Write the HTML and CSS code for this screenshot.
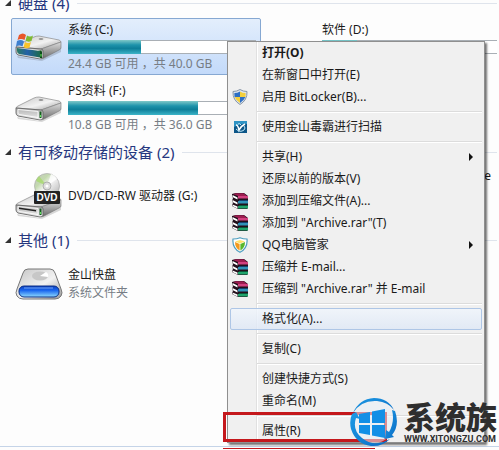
FILE: index.html
```html
<!DOCTYPE html>
<html lang="zh-CN">
<head>
  <meta charset="UTF-8">
  <meta name="viewport" content="width=device-width, initial-scale=1.0">
  <title>计算机</title>
  <link rel="stylesheet" href="styles.css">
</head>
<body>
  <!-- 图标定义 -->
  <svg class="defs" width="0" height="0" aria-hidden="true">
    <defs>
      <linearGradient id="top" x1="0" y1="0" x2="1" y2="1">
        <stop offset="0" stop-color="#c4c4c4"/>
        <stop offset=".55" stop-color="#f2f2f2"/>
        <stop offset="1" stop-color="#999"/>
      </linearGradient>
      <linearGradient id="side" x1="0" y1="0" x2="0" y2="1">
        <stop offset="0" stop-color="#dcdcdc"/>
        <stop offset="1" stop-color="#6c6c6c"/>
      </linearGradient>
      <linearGradient id="front" x1="0" y1="0" x2="0" y2="1">
        <stop offset="0" stop-color="#b0b0b0"/>
        <stop offset="1" stop-color="#eee"/>
      </linearGradient>
      <linearGradient id="sysfront" x1="0" y1="0" x2="1" y2="0">
        <stop offset="0" stop-color="#2a7a63"/>
        <stop offset=".45" stop-color="#2461a8"/>
        <stop offset="1" stop-color="#1c6b4f"/>
      </linearGradient>
      <linearGradient id="blue" x1="0" y1="0" x2="0" y2="1">
        <stop offset="0" stop-color="#0a3fc0"/>
        <stop offset=".4" stop-color="#1a66ee"/>
        <stop offset="1" stop-color="#8fdcff"/>
      </linearGradient>
      <linearGradient id="disc" x1="0" y1="0" x2="1" y2="1">
        <stop offset="0" stop-color="#c6c6c6"/>
        <stop offset=".3" stop-color="#c3d9ae"/>
        <stop offset=".5" stop-color="#f5f5f5"/>
        <stop offset="1" stop-color="#a8a8a8"/>
      </linearGradient>
      <linearGradient id="logo" x1="0" y1="0" x2="1" y2="1">
        <stop offset="0" stop-color="#1d9be6"/>
        <stop offset="1" stop-color="#0a6bc4"/>
      </linearGradient>
    </defs>
    <symbol id="drive" viewBox="0 0 48 26">
      <path d="M2 21 25 25 46 13V17L27 26 3 23Z" fill="#000" opacity=".15"/>
      <path d="M1 12Q1 11 3 10L19 2Q21 1 24 1L44 5Q46 6 46 7L26 14Z" fill="url(#top)" stroke="#8b8b8b" stroke-width=".7"/>
      <path d="M26 14 46 7V13Q46 14 44 15L29 23Q27 24 26 23Z" fill="url(#side)" stroke="#777" stroke-width=".6"/>
      <path d="M1 12 26 14Q28 14 28 16V22Q28 24 25 24L3 20Q1 19 1 17Z" fill="url(#front)" stroke="#666" stroke-width=".9"/>
      <path d="M3 13.500 23 15.500V21.500L4 18.500Q3 18 3 17Z" fill="none" stroke="#fff" stroke-width=".8"/>
      <path d="M24.500 15.500H26.500V22H24.500Z" fill="#175a20"/>
      <path d="M25 19H26V21H25Z" fill="#5de35b"/>
      <ellipse cx="26" cy="4" rx="2.500" ry=".8" fill="#777"/>
    </symbol>
    <symbol id="rar" viewBox="0 0 16 16">
      <path d="M4 0H12L16 3V15L15 16H6L0 13V12L1 10 0 8 1 5 0 3V1Z" fill="#22101c"/>
      <path d="M1 1 4 .3H11.500L15 3H6Z" fill="#9c1d50"/>
      <path d="M6 3H16V5.500H6Z" fill="#d2417f"/>
      <path d="M7 7H16V8H7Z" fill="#17406e"/>
      <path d="M6 8H16V10.500H6Z" fill="#2f92b8"/>
      <path d="M7 12H16V13H7Z" fill="#0a5438"/>
      <path d="M6 13H16V15.500H6Z" fill="#1fa36b"/>
      <path d="M.5 2 5.500 4.500V6.500L.5 4ZM.5 7 5.500 9.500V11.500L.5 9ZM.5 11.500 5.500 13.500V15.500L.5 13Z" fill="#fff"/>
    </symbol>
  </svg>

  <!-- 资源管理器内容 -->
  <main class="explorer">
    <section class="group">
      <h2 class="group-title"><span class="arrow"></span>硬盘 (4)</h2>
      <div class="tiles">
        <article class="tile selected">
          <svg class="tile-icon" viewBox="0 0 48 48" aria-hidden="true">
            <use href="#drive" y="12" width="48" height="26"/>
            <path d="M2 25 25 28V34.500L4 31Q2 30 2 28Z" fill="url(#sysfront)"/>
            <path d="M25 28.500H27V35H25Z" fill="#0d4d1b"/>
            <path d="M25.500 31H26.500V33.500H25.500Z" fill="#6cf064"/>
            <path d="M4 12Q8 9 11 12L9.500 17Q6 15 2.500 17Z" fill="#e8562a"/>
            <path d="M12 12.500Q15 14.500 18 12.500L16.500 18Q13 19.500 10.500 17.500Z" fill="#7fba32"/>
            <path d="M2 18Q6 16 9 18.500L7.500 23.500Q4 21.500 1 23.500Z" fill="#3d7fd0"/>
            <path d="M10 19Q13 21 16 19L14.500 24.500Q11 26 8.500 24Z" fill="#f8c32c"/>
          </svg>
          <div class="tile-text">
            <span class="name">系统 (C:)</span>
            <span class="bar"><span class="fill" style="width: 39%"></span></span>
            <span class="info">24.4 GB 可用 ，共 40.0 GB</span>
          </div>
        </article>
        <article class="tile">
          <span class="tile-icon"></span>
          <div class="tile-text">
            <span class="name">软件 (D:)</span>
            <span class="bar"><span class="fill" style="width: 19%"></span></span>
            <span class="info"></span>
          </div>
        </article>
        <article class="tile">
          <svg class="tile-icon" viewBox="0 0 48 48" aria-hidden="true">
            <use href="#drive" y="12" width="48" height="26"/>
          </svg>
          <div class="tile-text">
            <span class="name">PS资料 (F:)</span>
            <span class="bar"><span class="fill" style="width: 70%"></span></span>
            <span class="info">10.8 GB 可用 ，共 36.0 GB</span>
          </div>
        </article>
      </div>
    </section>

    <section class="group">
      <h2 class="group-title"><span class="arrow"></span>有可移动存储的设备 (2)</h2>
      <div class="tiles">
        <article class="tile">
          <svg class="tile-icon" viewBox="0 0 48 48" aria-hidden="true">
            <use href="#drive" y="21" width="48" height="26"/>
            <path d="M4 35.500 21 38V39.500L4 37Z" fill="#222"/>
            <circle cx="32" cy="14" r="12.500" fill="url(#disc)" stroke="#aaa" stroke-width=".7"/>
            <path d="M32 14 21 9Q22 6 24 4Z" fill="#a8d96e" opacity=".8"/>
            <path d="M32 14 36 2Q40 3 42 7Z" fill="#fff" opacity=".8"/>
            <circle cx="32" cy="14" r="4" fill="#ddd" stroke="#999" stroke-width=".7"/>
            <circle cx="32" cy="14" r="1.500" fill="#fff"/>
            <rect x="19" y="19" width="26" height="13" rx="1" fill="#222"/>
            <text class="dvd" x="32" y="29" text-anchor="middle">DVD</text>
          </svg>
          <div class="tile-text">
            <span class="name">DVD/CD-RW 驱动器 (G:)</span>
          </div>
        </article>
        <article class="tile">
          <span class="tile-icon"></span>
          <div class="tile-text device">
            <span class="name">e</span>
          </div>
        </article>
      </div>
    </section>

    <section class="group">
      <h2 class="group-title"><span class="arrow"></span>其他 (1)</h2>
      <div class="tiles">
        <article class="tile">
          <svg class="tile-icon" viewBox="0 0 48 48" aria-hidden="true">
            <path d="M8 13Q9 9 13 9H35Q39 9 40 13L46 29Q48 33 46 36Q44 39 40 39H8Q4 39 2 36Q0 33 2 29Z" fill="url(#top)" stroke="#777" stroke-width="1"/>
            <ellipse cx="25" cy="16" rx="8" ry="4.500" fill="#c7c7c7"/>
            <path d="M25 16 31 12Q34 14 33 17Z" fill="#fff"/>
            <rect x="4" y="26" width="40" height="11" rx="5" fill="url(#blue)" stroke="#0b2f86" stroke-width="1"/>
            <path d="M9 28H38" stroke="#9cc8ff" stroke-width="1" opacity=".7"/>
          </svg>
          <div class="tile-text">
            <span class="name">金山快盘</span>
            <span class="info">系统文件夹</span>
          </div>
        </article>
      </div>
    </section>
  </main>
  <footer class="details"></footer>

  <!-- 右键菜单 -->
  <nav class="menu">
    <button class="item default" type="button"><span class="icon"></span>打开(O)</button>
    <button class="item" type="button"><span class="icon"></span>在新窗口中打开(E)</button>
    <button class="item" type="button">
      <svg class="icon" viewBox="0 0 16 16" aria-hidden="true">
        <path d="M8 .5Q11 2.500 15 2.500Q15.500 11 8 15.500Q.5 11 1 2.500Q5 2.500 8 .5Z" fill="#dfe6ee" stroke="#8595a6"/>
        <path d="M8 2.500V8H2.600Q2.300 6 2.400 4Q5.500 4 8 2.500Z" fill="#2d6fc4"/>
        <path d="M8 2.500V8H13.400Q13.700 6 13.600 4Q10.500 4 8 2.500Z" fill="#f3cf3b"/>
        <path d="M8 8V14Q4 11.500 2.600 8Z" fill="#f3cf3b"/>
        <path d="M8 8V14Q12 11.500 13.400 8Z" fill="#2d6fc4"/>
      </svg>启用 BitLocker(B)...
    </button>
    <hr>
    <button class="item" type="button">
      <svg class="icon" viewBox="0 0 16 16" aria-hidden="true">
        <rect x="2" y="2" width="13" height="12" fill="#0d5688"/>
        <path d="M2 2H15V5Q8 4 2 8Z" fill="#2f93c4"/>
        <path d="M4 6Q6 6 7 11Q9 7 13 5" fill="none" stroke="#fff" stroke-width="1.600"/>
        <path d="M4 10Q8 14 12 11Q14 9 12 7M6 5Q8 4 9 6" fill="none" stroke="#bfe8f7" stroke-width="1"/>
      </svg>使用金山毒霸进行扫描
    </button>
    <hr>
    <button class="item sub" type="button"><span class="icon"></span>共享(H)</button>
    <button class="item" type="button"><span class="icon"></span>还原以前的版本(V)</button>
    <button class="item" type="button"><svg class="icon" aria-hidden="true"><use href="#rar"/></svg>添加到压缩文件(A)...</button>
    <button class="item" type="button"><svg class="icon" aria-hidden="true"><use href="#rar"/></svg>添加到 "Archive.rar"(T)</button>
    <button class="item sub" type="button">
      <svg class="icon" viewBox="0 0 16 16" aria-hidden="true">
        <path d="M8 .7Q11 2 15 2Q16 11 8 15.300Q0 11 1 2Q5 2 8 .7Z" fill="#fff" stroke="#4f9fc0" stroke-width="1.200"/>
        <path d="M3 4.500 8 3 13 4.500 8 6.500Z" fill="#ffe36b"/>
        <path d="M3 5 7.600 7V13.500Q3 11 3 5Z" fill="#f39a1d"/>
        <path d="M13 5 8.400 7V13.500Q13 11 13 5Z" fill="#58b72c"/>
      </svg>QQ电脑管家
    </button>
    <button class="item" type="button"><svg class="icon" aria-hidden="true"><use href="#rar"/></svg>压缩并 E-mail...</button>
    <button class="item" type="button"><svg class="icon" aria-hidden="true"><use href="#rar"/></svg>压缩到 "Archive.rar" 并 E-mail</button>
    <hr>
    <button class="item active" type="button"><span class="icon"></span>格式化(A)...</button>
    <hr>
    <button class="item" type="button"><span class="icon"></span>复制(C)</button>
    <hr>
    <button class="item" type="button"><span class="icon"></span>创建快捷方式(S)</button>
    <button class="item" type="button"><span class="icon"></span>重命名(M)</button>
    <hr>
    <button class="item" type="button"><span class="icon"></span>属性(R)</button>
  </nav>

  <!-- 标注框 -->
  <div class="mark"></div>
  <div class="mark-line"></div>

  <!-- 站点水印 -->
  <div class="watermark">
    <svg class="watermark-logo" viewBox="0 0 48 50" aria-hidden="true">
      <circle cx="24" cy="25" r="21" fill="#e9f1f8" opacity=".55"/>
      <path d="M3 16Q9 2 24 1Q38 1 44 13Q38 5 27 4Q11 3 3 16Z" fill="url(#logo)"/>
      <path d="M45 14Q50 28 42 38L44 40 35 42 36 33 39 35Q45 25 42 13Z" fill="url(#logo)"/>
      <path d="M40 42Q32 50 21 49Q6 47 1 32Q-1 24 2 17L6 15 10 22 6 21Q2 33 12 41Q24 51 40 42Z" fill="url(#logo)"/>
      <path d="M9 17 20 15V26H9ZM22 14.500 35 12V26H22ZM9 28H20V38L9 36ZM22 28H35V41L22 38.500Z" fill="#128fe6"/>
    </svg>
    <div class="watermark-text">
      <strong class="site">系统族</strong>
      <span class="url">WWW.XITONGZU.COM</span>
    </div>
  </div>
</body>
</html>
```
FILE: styles.css
```css
:root {
  --text: #1a1a1a;
  --muted: #777d85;
  --title: #26377f;
  --menu-bg: #f0f0f0;
  --red: #c4181c;
}

* {
  margin: 0;
  padding: 0;
  box-sizing: border-box;
}

body {
  position: relative;
  display: flex;
  flex-direction: column;
  height: 100vh;
  overflow: hidden;
  background: #fdfdfd;
  color: var(--text);
  font-family: "Noto Sans", "Noto Sans CJK SC", sans-serif;
  font-size: 12px;
  line-height: 16px;
}

.defs {
  position: absolute;
}

/* 资源管理器 */
.explorer {
  flex: 1;
  margin-top: -13px;
  margin-right: 2px;
  overflow: hidden;
}

.group-title {
  display: flex;
  align-items: center;
  height: 22px;
  margin: 5px 0 4px;
  padding-left: 5px;
  color: var(--title);
  font-size: 15px;
  font-weight: 400;
  white-space: nowrap;
}

.group-title::after {
  content: "";
  flex: 1;
  height: 1px;
  margin-left: 8px;
  background: #dfe4ec;
}

.arrow {
  margin-right: 7px;
  border-left: 6px solid transparent;
  border-bottom: 6px solid #333;
}

.tiles {
  display: grid;
  grid-template-columns: repeat(2, 250px);
  gap: 4px;
  padding-left: 11px;
}

.tile {
  display: flex;
  align-items: center;
  gap: 5px;
  height: 57px;
  padding: 0 4px 0 3px;
  border: 1px solid transparent;
  border-radius: 2px;
}

.tile.selected {
  border-color: #86a8d2;
  background: linear-gradient(#e3eefc, #c3dafa);
}

.tile-icon {
  flex: none;
  width: 48px;
  height: 48px;
}

.tile-text {
  flex: 1;
  display: flex;
  flex-direction: column;
  gap: 2px;
  white-space: nowrap;
}

.device {
  align-items: flex-end;
  align-self: flex-start;
  padding-right: 19px;
}

.bar {
  height: 14px;
  border: 1px solid #a9afb5;
  background: #fff;
}

/* el relleno tapa el borde de la barra */
.fill {
  display: block;
  height: 14px;
  margin: -1px;
  background: linear-gradient(#7fc8c8, #1e93ab 35%, #0d7e98 60%, #3cb4c8);
}

.info {
  min-height: 16px;
  color: var(--muted);
}

.dvd {
  fill: #fff;
  font-family: "Liberation Sans", sans-serif;
  font-size: 10px;
  font-weight: 700;
}

.details {
  flex: none;
  height: 4px;
  border-top: 1px solid #c5d4e8;
}

/* 右键菜单 */
.menu {
  position: absolute;
  top: 41px;
  left: 227px;
  width: 258px;
  padding: 0 2px;
  border: 1px solid #8f8f8f;
  background: linear-gradient(90deg, transparent 28px, #e0e0e0 28px, #e0e0e0 29px, #fff 29px, #fff 30px, transparent 30px) var(--menu-bg);
  box-shadow: 2px 2px 2px rgba(0, 0, 0, 0.55);
}

.menu hr {
  height: 8px;
  margin-left: 27px;
  border: 0;
  background: linear-gradient(transparent 3px, #dcdcdc 3px, #dcdcdc 4px, #fff 4px, #fff 5px, transparent 5px);
}

.item {
  display: flex;
  align-items: center;
  width: 100%;
  height: 22px;
  padding: 0 8px 0 1px;
  border: 1px solid transparent;
  border-radius: 2px;
  background: none;
  color: inherit;
  font: inherit;
  text-align: left;
  white-space: nowrap;
}

.item .icon {
  flex: none;
  width: 16px;
  height: 16px;
  margin-right: 14px;
}

.item.default {
  font-weight: 700;
}

.item.sub::after {
  content: "";
  margin-left: auto;
  border: 4px solid transparent;
  border-left-color: #111;
  border-right-width: 0;
}

.item.active {
  border-color: #aec6e6;
  background: linear-gradient(rgba(240, 245, 252, 0.8), rgba(222, 232, 246, 0.8));
}

/* 标注框 */
.mark {
  position: absolute;
  top: 412px;
  left: 223px;
  width: 164px;
  height: 30px;
  border: 3px solid var(--red);
}

.mark-line {
  position: absolute;
  top: 448px;
  left: 223px;
  width: 152px;
  height: 1px;
  background: var(--red);
}

/* 水印 */
.watermark {
  position: absolute;
  top: 397px;
  left: 350px;
  display: flex;
  align-items: center;
  gap: 6px;
  color: #2e2e2e;
  white-space: nowrap;
}

.watermark-logo {
  width: 48px;
  height: 50px;
}

.watermark-text {
  display: flex;
  flex-direction: column;
}

.site {
  font-family: "Noto Sans CJK SC", sans-serif;
  font-size: 31px;
  font-weight: 900;
  line-height: 34px;
}

.url {
  font-family: Roboto, sans-serif;
  font-size: 9px;
  font-weight: 700;
  line-height: 12px;
}
```
